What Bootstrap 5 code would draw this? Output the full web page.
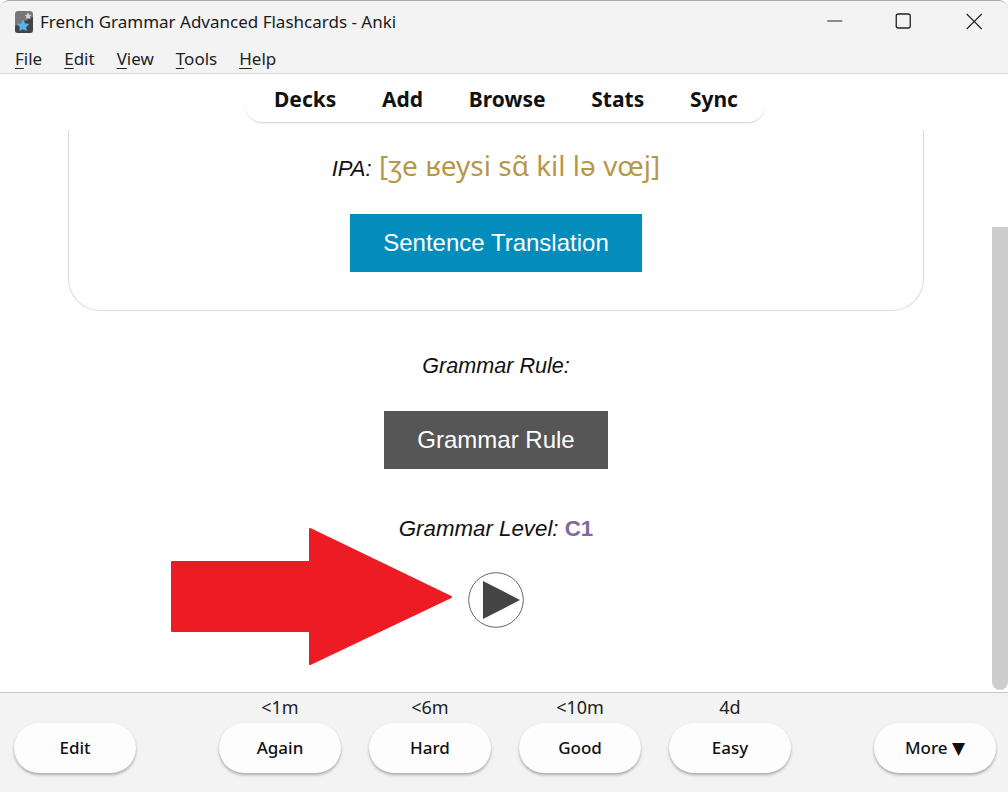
<!DOCTYPE html>
<html lang="en">
<head>
<meta charset="utf-8">
<title>French Grammar Advanced Flashcards - Anki</title>
<link rel="stylesheet" href="https://cdn.jsdelivr.net/npm/bootstrap@5.3.0/dist/css/bootstrap.min.css">
<style>
html,body{height:792px;overflow:hidden;background:#fff}
body{font-family:"Noto Sans",sans-serif;color:#000;width:1008px}
.title-strip{height:44px;background:#f3f3f3;border-top:1px solid #a9a9a9;border-radius:9px 9px 0 0;font-size:17px;color:#1a1a1a;padding-left:15px;padding-bottom:2px}
.app-logo{width:18px;height:22px;margin-right:7px}
.win-ctl{width:70.5px;height:43px}
.menu-strip{height:30px;background:#f3f3f3;border-bottom:1px solid #dcdcdc;font-size:17px;color:#222;padding-left:15px;gap:22px}
.menu-strip u{text-underline-offset:3px;text-decoration-thickness:1px}
.web-area{height:618px;background:#fff}
.page-col{width:992px;height:618px;overflow:hidden}
.top-tabs{height:48px;width:520px;margin-left:245px;padding:3px 27px 0 29px;border-radius:0 0 17px 17px;box-shadow:0 2px 2px -1px rgba(0,0,0,.2);font-weight:700;font-size:21px;color:#111}
.note-shell{height:181px;margin:8px 0 0 68px;width:856px;border:1px solid #d9d9d9;border-top:0;border-radius:0 0 32px 32px;padding-top:16px}
.ipa-line{font-size:28px;line-height:38px;height:38px;white-space:nowrap}
.ipa-label{font-family:"Liberation Sans",sans-serif;font-style:italic;font-size:22px;color:#111}
.ipa-text{color:#b8964c}
.hint-box{height:58px;font-family:"Liberation Sans",sans-serif;font-size:24px;color:#fff;border-radius:0;border:0;padding:0}
.hint-blue{width:292px;background:#038cbc;margin-top:30px}
.hint-dark{width:224px;background:#565656;margin-top:30px}
.field-label{font-family:"Liberation Sans",sans-serif;font-style:italic;line-height:30px;color:#111}
.level-code{font-style:normal;font-weight:700;color:#80699e}
.rule-label{margin-top:40px;font-size:21.6px}
.level-label{margin-top:45px;font-size:22.3px}
.scroll-rail{width:16px;height:618px;background:#fff}
.scroll-thumb{height:463px;margin-top:153px;background:#cdcdcd;border-radius:0 0 8px 8px}
.arrow-over{position:absolute;left:170px;top:527px;width:285px;height:139px}
.replay{position:absolute;left:468px;top:572px;width:56px;height:56px}
.answer-strip{height:100px;background:#f3f3f3;border-top:1px solid #c8c8c8;position:relative}
.ease-col{width:122px;position:absolute;top:0}
.ease-time{height:28px;line-height:28px;font-size:18px;text-align:center;color:#222}
.pill{display:block;width:122px;height:50px;margin-top:2px;border-radius:25px;background:#fdfdfd;border:0;box-shadow:0 2px 3px rgba(0,0,0,.3);font-size:17px;font-weight:500;color:#111;padding:0}
.pill-tri{font-family:"DejaVu Sans",sans-serif;font-size:17px;line-height:1}
</style>
</head>
<body>
<div class="title-strip d-flex align-items-center">
  <svg class="app-logo" viewBox="0 0 18 22"><rect width="18" height="22" rx="3" fill="#777"/><path d="M0 15 18 6V19a3 3 0 0 1-3 3H3a3 3 0 0 1-3-3Z" fill="#444"/><path d="M8 8.500l2 3.700 4.200.7-3 3 .7 4.200-3.900-1.900-3.800 1.900.7-4.200-3-3 4.200-.7Z" fill="#5ab0ec"/><path d="M13 1.500l1.200 2.200 2.300.3-1.600 1.600.4 2.300-2.300-1-2 1 .3-2.300-1.600-1.600 2.300-.3Z" fill="#ccd6e0"/></svg>
  <span>French Grammar Advanced Flashcards - Anki</span>
  <div class="ms-auto d-flex">
    <svg class="win-ctl" viewBox="0 0 70 43"><path d="M30 21h15" stroke="#222" stroke-width="1"/></svg>
    <svg class="win-ctl" viewBox="0 0 70 43"><rect x="29" y="14" width="14" height="14" rx="2" fill="none" stroke="#222" stroke-width="1.300"/></svg>
    <svg class="win-ctl" viewBox="0 0 70 43"><path d="M28.500 14l15 15M43.500 14l-15 15" stroke="#222" stroke-width="1.100"/></svg>
  </div>
</div>
<div class="menu-strip d-flex align-items-center">
  <span><u>F</u>ile</span><span><u>E</u>dit</span><span><u>V</u>iew</span><span><u>T</u>ools</span><span><u>H</u>elp</span>
</div>
<div class="web-area d-flex">
  <div class="page-col">
    <div class="top-tabs d-flex justify-content-between align-items-center"><span>Decks</span><span>Add</span><span>Browse</span><span>Stats</span><span>Sync</span></div>
    <div class="note-shell d-flex flex-column align-items-center">
      <div class="ipa-line"><span class="ipa-label">IPA:</span> <span class="ipa-text">[ʒe ʁeysi sɑ̃ kil lə vœj]</span></div>
      <button class="btn hint-box hint-blue">Sentence Translation</button>
    </div>
    <div class="d-flex flex-column align-items-center">
      <div class="field-label rule-label">Grammar Rule:</div>
      <button class="btn hint-box hint-dark">Grammar Rule</button>
      <div class="field-label level-label">Grammar Level: <span class="level-code">C1</span></div>
    </div>
  </div>
  <div class="scroll-rail"><div class="scroll-thumb"></div></div>
</div>
<svg class="arrow-over" viewBox="0 0 285 139"><path d="M2 35H140V2L281 70 140 137V104H2Z" fill="#ed1c24" stroke="#ed1c24" stroke-width="2" stroke-linejoin="round"/></svg>
<svg class="replay" viewBox="0 0 56 56"><circle cx="28" cy="28" r="27.300" fill="#fff" stroke="#666" stroke-width="1"/><path d="M15 9 52 28 15 47Z" fill="#444"/></svg>
<div class="answer-strip">
  <div class="ease-col" style="left:14px"><div class="ease-time"></div><button class="pill">Edit</button></div>
  <div class="ease-col" style="left:219px"><div class="ease-time">&lt;1m</div><button class="pill">Again</button></div>
  <div class="ease-col" style="left:369px"><div class="ease-time">&lt;6m</div><button class="pill">Hard</button></div>
  <div class="ease-col" style="left:519px"><div class="ease-time">&lt;10m</div><button class="pill">Good</button></div>
  <div class="ease-col" style="left:669px"><div class="ease-time">4d</div><button class="pill">Easy</button></div>
  <div class="ease-col" style="left:874px"><div class="ease-time"></div><button class="pill">More <span class="pill-tri">▼</span></button></div>
</div>
<script src="https://cdn.jsdelivr.net/npm/bootstrap@5.3.0/dist/js/bootstrap.bundle.min.js"></script>
</body>
</html>
